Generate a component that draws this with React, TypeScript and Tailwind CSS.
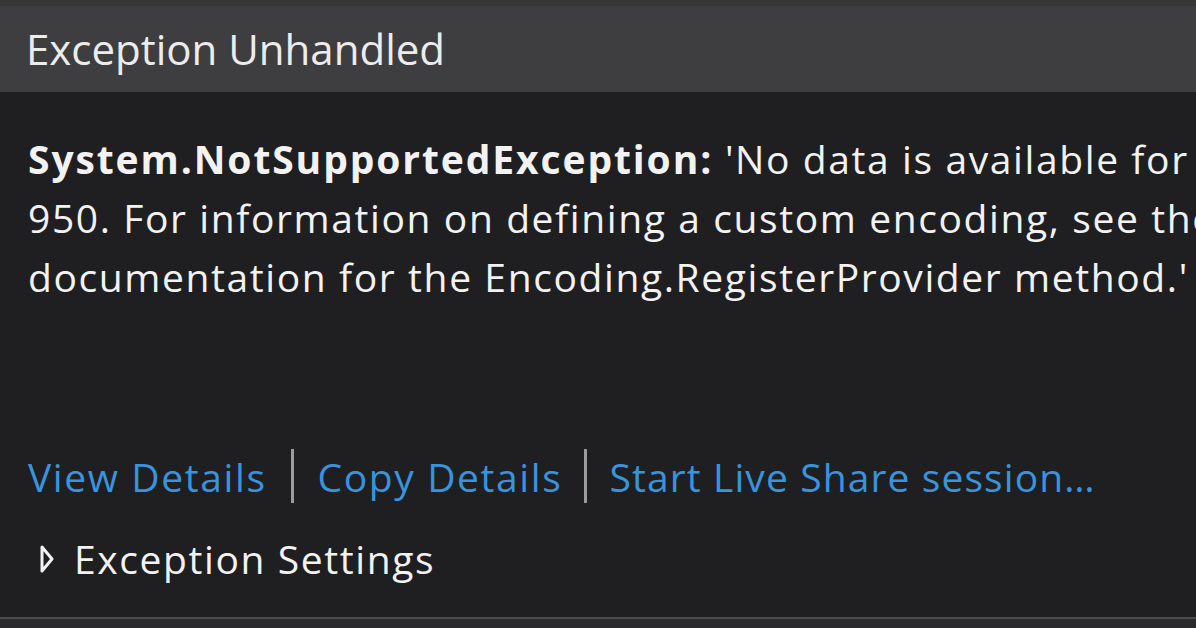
export default function App() {
  return (
    <div
      className="w-[1196px] h-[628px] overflow-hidden flex flex-col bg-[#1f1f21] text-[#f2f2f2]"
      style={{ fontFamily: '"Open Sans", "Noto Sans", sans-serif' }}
    >
      {/* Title bar */}
      <div className="h-[92px] shrink-0 border-t-[6px] border-[#363637] bg-[#3e3e40] flex items-center pl-[26px]">
        <span className="text-[42px] leading-none text-[#ececec]">Exception Unhandled</span>
      </div>

      {/* Message */}
      <div className="flex-1 flex flex-col px-[28px] pt-[37px] text-[39px] tracking-[1.6px]">
        <div className="leading-[59px] whitespace-nowrap">
          <div>
            <span className="font-bold tracking-[1.9px]">System.NotSupportedException:</span> 'No data is available for encoding
          </div>
          <div>950. For information on defining a custom encoding, see the</div>
          <div>documentation for the Encoding.RegisterProvider method.'</div>
        </div>

        {/* Links */}
        <div className="mt-[143px] flex items-center leading-none text-[#3794de]">
          <span>View Details</span>
          <span className="mx-[24px] w-[3px] h-[54px] bg-[#9c9c9c]" />
          <span>Copy Details</span>
          <span className="mx-[22px] w-[3px] h-[54px] bg-[#9c9c9c]" />
          <span className="tracking-[1.1px]">Start Live Share session…</span>
        </div>

        <div className="mt-[36px] flex items-center gap-[20px] pl-[12px]">
          <svg width="14" height="28" viewBox="0 0 14 28">
            <path d="M2 2 L12 14 L2 26 Z" fill="none" stroke="#f2f2f2" strokeWidth="3" strokeLinejoin="round" />
          </svg>
          <span className="leading-none">Exception Settings</span>
        </div>
      </div>

      {/* Bottom edge */}
      <div className="h-[11px] shrink-0 border-t-2 border-[#4c4c4e] bg-[#2a2a2c]" />
    </div>
  )
}
